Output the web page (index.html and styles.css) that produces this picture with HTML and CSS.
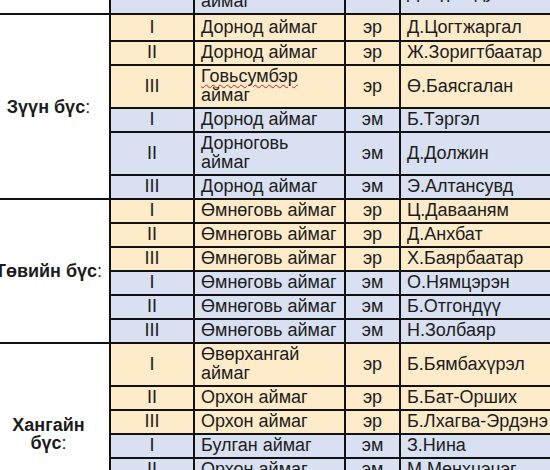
FILE: index.html
```html
<!DOCTYPE html>
<html lang="mn">
<head>
<meta charset="utf-8">
<link rel="stylesheet" href="styles.css">
</head>
<body>
<table class="grid">
  <colgroup>
    <col class="c-zone">
    <col class="c-place">
    <col class="c-aimag">
    <col class="c-sex">
    <col class="c-name">
  </colgroup>
  <tbody>
    <tr class="blue">
      <td class="zone"></td>
      <td class="place">III</td>
      <td class="aimag">Дорноговь аймаг</td>
      <td class="sex">эм</td>
      <td class="name">Д.Пүрэвдулам</td>
    </tr>
    <tr class="orange tall">
      <td class="zone" rowspan="6"><b>Зүүн бүс</b>:</td>
      <td class="place">I</td>
      <td class="aimag">Дорнод аймаг</td>
      <td class="sex">эр</td>
      <td class="name">Д.Цогтжаргал</td>
    </tr>
    <tr class="orange">
      <td class="place">II</td>
      <td class="aimag">Дорнод аймаг</td>
      <td class="sex">эр</td>
      <td class="name">Ж.Зоригтбаатар</td>
    </tr>
    <tr class="orange">
      <td class="place">III</td>
      <td class="aimag"><span class="typo">Говьсумбэр</span> аймаг</td>
      <td class="sex">эр</td>
      <td class="name">Ө.Баясгалан</td>
    </tr>
    <tr class="blue">
      <td class="place">I</td>
      <td class="aimag">Дорнод аймаг</td>
      <td class="sex">эм</td>
      <td class="name">Б.Тэргэл</td>
    </tr>
    <tr class="blue">
      <td class="place">II</td>
      <td class="aimag">Дорноговь аймаг</td>
      <td class="sex">эм</td>
      <td class="name">Д.Должин</td>
    </tr>
    <tr class="blue">
      <td class="place">III</td>
      <td class="aimag">Дорнод аймаг</td>
      <td class="sex">эм</td>
      <td class="name">Э.Алтансувд</td>
    </tr>
    <tr class="orange">
      <td class="zone" rowspan="6"><b>Төвийн бүс</b>:</td>
      <td class="place">I</td>
      <td class="aimag">Өмнөговь аймаг</td>
      <td class="sex">эр</td>
      <td class="name">Ц.Давааням</td>
    </tr>
    <tr class="orange">
      <td class="place">II</td>
      <td class="aimag">Өмнөговь аймаг</td>
      <td class="sex">эр</td>
      <td class="name">Д.Анхбат</td>
    </tr>
    <tr class="orange">
      <td class="place">III</td>
      <td class="aimag">Өмнөговь аймаг</td>
      <td class="sex">эр</td>
      <td class="name">Х.Баярбаатар</td>
    </tr>
    <tr class="blue">
      <td class="place">I</td>
      <td class="aimag">Өмнөговь аймаг</td>
      <td class="sex">эм</td>
      <td class="name">О.Нямцэрэн</td>
    </tr>
    <tr class="blue">
      <td class="place">II</td>
      <td class="aimag">Өмнөговь аймаг</td>
      <td class="sex">эм</td>
      <td class="name">Б.Отгондүү</td>
    </tr>
    <tr class="blue">
      <td class="place">III</td>
      <td class="aimag">Өмнөговь аймаг</td>
      <td class="sex">эм</td>
      <td class="name">Н.Золбаяр</td>
    </tr>
    <tr class="orange">
      <td class="zone" rowspan="6"><b>Хангайн бүс</b>:</td>
      <td class="place">I</td>
      <td class="aimag">Өвөрхангай аймаг</td>
      <td class="sex">эр</td>
      <td class="name">Б.Бямбахүрэл</td>
    </tr>
    <tr class="orange">
      <td class="place">II</td>
      <td class="aimag">Орхон аймаг</td>
      <td class="sex">эр</td>
      <td class="name">Б.Бат-Орших</td>
    </tr>
    <tr class="orange">
      <td class="place">III</td>
      <td class="aimag">Орхон аймаг</td>
      <td class="sex">эр</td>
      <td class="name">Б.Лхагва-Эрдэнэ</td>
    </tr>
    <tr class="blue">
      <td class="place">I</td>
      <td class="aimag">Булган аймаг</td>
      <td class="sex">эм</td>
      <td class="name">З.Нина</td>
    </tr>
    <tr class="blue">
      <td class="place">II</td>
      <td class="aimag">Орхон аймаг</td>
      <td class="sex">эм</td>
      <td class="name">М.Мөнхцэцэг</td>
    </tr>
    <tr class="blue">
      <td class="place">III</td>
      <td class="aimag">Өвөрхангай аймаг</td>
      <td class="sex">эм</td>
      <td class="name">Г.Энхжин</td>
    </tr>
  </tbody>
</table>
</body>
</html>
```
FILE: styles.css
```css
html, body {
  margin: 0;
  padding: 0;
  background: #ffffff;
  overflow: hidden;
}

body {
  width: 550px;
  height: 470px;
  font-family: "Liberation Sans", Arial, sans-serif;
  font-size: 18px;
  color: #1c1c1c;
}

.grid {
  border-collapse: collapse;
  table-layout: fixed;
  width: 582px;
  margin: -30px 0 0 -12px;
}

.c-zone { width: 122px; }
.c-place { width: 84px; }
.c-aimag { width: 151px; }
.c-sex { width: 55px; }
.c-name { width: 170px; }

.grid td {
  border: 2px solid #111;
  padding: 1px 6px 2px 6px;
  line-height: 19px;
  vertical-align: middle;
}

.grid .tall td {
  padding-top: 3px;
  padding-bottom: 3px;
}

.grid td.zone {
  background: #ffffff;
  text-align: center;
  border-left: none;
  padding: 0 5px;
  line-height: 18px;
}

.orange td.place,
.orange td.aimag,
.orange td.sex,
.orange td.name {
  background: #fdebc9;
}

.blue td.place,
.blue td.aimag,
.blue td.sex,
.blue td.name {
  background: #d8e0f1;
}

.place,
.sex {
  text-align: center;
}

.aimag {
  text-align: left;
  white-space: normal;
}

.name {
  text-align: left;
  white-space: nowrap;
  overflow: hidden;
}

.typo {
  text-decoration: underline wavy #d42020;
  text-decoration-thickness: 1px;
  text-underline-offset: 2px;
}
```
